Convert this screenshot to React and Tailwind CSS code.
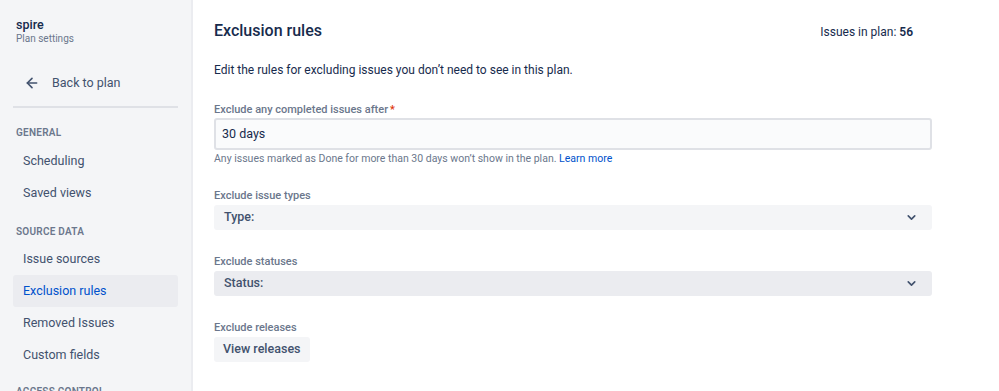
import { ArrowLeft, ChevronDown } from "lucide-react";

const font = { fontFamily: "Roboto, 'Liberation Sans', sans-serif" };

function NavItem({ label, active }) {
  return (
    <div
      className={
        "h-[32px] mx-[13px] px-[10px] flex items-center rounded-[3px] text-[12.5px] " +
        (active ? "bg-[#ebecf0] text-[#0052cc]" : "text-[#42526e]")
      }
    >
      {label}
    </div>
  );
}

function Section({ title, className = "" }) {
  return (
    <div
      className={
        "h-[24px] px-[16px] flex items-center text-[10px] font-semibold tracking-wide uppercase text-[#6b778c] " +
        className
      }
    >
      {title}
    </div>
  );
}

function Label({ children }) {
  return <div className="pt-[1px] text-[11px] font-medium text-[#6b778c] leading-[14px]">{children}</div>;
}

function Select({ label, tone }) {
  return (
    <div
      className={
        "mt-[2px] h-[25px] rounded-[3px] flex items-center justify-between pl-[10px] pr-[14px] " + tone
      }
    >
      <span className="text-[12.5px] font-medium text-[#42526e]">{label}</span>
      <ChevronDown size={13} strokeWidth={3} className="text-[#42526e]" />
    </div>
  );
}

export default function App() {
  return (
    <div className="flex w-[999px] h-[391px] overflow-hidden bg-white" style={font}>
      <aside className="w-[193px] shrink-0 bg-[#f4f5f7] border-r-2 border-[#ebecf0]">
        <div className="pt-[17px] px-[16px]">
          <div className="text-[12.5px] font-medium text-[#172b4d] leading-[16px]">spire</div>
          <div className="text-[10px] text-[#6b778c] leading-[12px]">Plan settings</div>
        </div>
        <div className="mt-[22px] h-[32px] flex items-center pl-[24px] gap-[12px] text-[12.5px] text-[#42526e]">
          <ArrowLeft size={16} strokeWidth={2.4} className="text-[#42526e]" />
          <span>Back to plan</span>
        </div>
        <div className="mt-[7px] mx-[13px] border-t-2 border-[#dfe1e6]" />
        <Section title="General" className="mt-[12px]" />
        <div className="mt-[1px]">
          <NavItem label="Scheduling" />
          <NavItem label="Saved views" />
        </div>
        <Section title="Source data" className="mt-[10px]" />
        <div>
          <NavItem label="Issue sources" />
          <NavItem label="Exclusion rules" active />
          <NavItem label="Removed Issues" />
          <NavItem label="Custom fields" />
        </div>
        <Section title="Access control" className="mt-[8px]" />
      </aside>

      <main className="flex-1 pl-[21px] pr-[67px]">
        <div className="h-[60px] flex items-center justify-between pr-[19px]">
          <h1 className="text-[16px] font-medium text-[#172b4d] mt-[1px]">Exclusion rules</h1>
          <div className="text-[12px] text-[#172b4d] mt-[3px]">
            Issues in plan: <span className="font-semibold">56</span>
          </div>
        </div>
        <p className="mt-[2px] text-[12px] text-[#172b4d] leading-[16px]">
          Edit the rules for excluding issues you don’t need to see in this plan.
        </p>

        <div className="mt-[24px]">
          <Label>
            Exclude any completed issues after<span className="text-[#de350b] ml-[2px]">*</span>
          </Label>
          <div className="mt-[1px] h-[32px] rounded-[3px] border-2 border-[#dfe1e6] bg-[#fafbfc] flex items-center px-[6px] text-[12.5px] text-[#172b4d]">
            30 days
          </div>
          <div className="mt-[2px] text-[10.5px] text-[#6b778c] leading-[14px]">
            Any issues marked as Done for more than 30 days won’t show in the plan.{" "}
            <span className="text-[#0052cc]">Learn more</span>
          </div>
        </div>

        <div className="mt-[22px]">
          <Label>Exclude issue types</Label>
          <Select label="Type:" tone="bg-[#f4f5f7]" />
        </div>

        <div className="mt-[24px]">
          <Label>Exclude statuses</Label>
          <Select label="Status:" tone="bg-[#ebecf0]" />
        </div>

        <div className="mt-[24px]">
          <Label>Exclude releases</Label>
          <button className="mt-[2px] h-[25px] px-[9px] rounded-[3px] bg-[#f4f5f7] text-[12.5px] font-medium text-[#42526e]">
            View releases
          </button>
        </div>
      </main>
    </div>
  );
}
